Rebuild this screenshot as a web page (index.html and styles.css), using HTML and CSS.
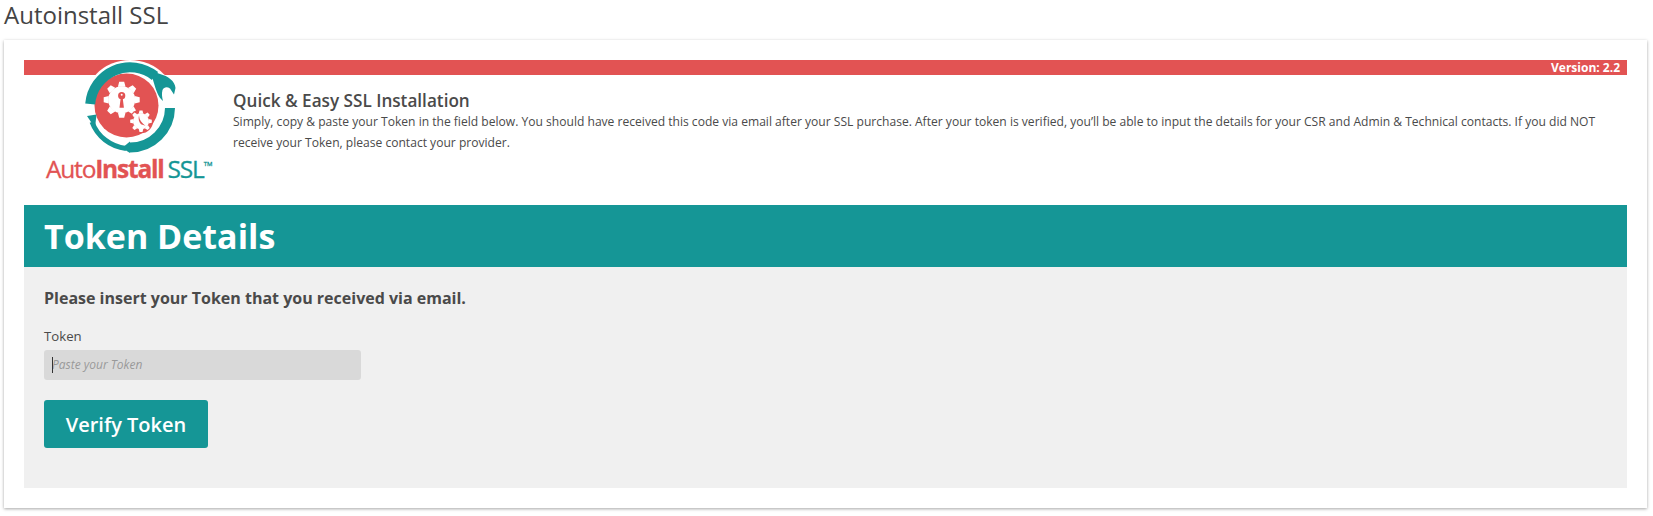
FILE: index.html
```html
<!DOCTYPE html>
<html lang="en">
<head>
    <meta charset="UTF-8">
    <meta name="viewport" content="width=device-width, initial-scale=1.0">
    <title>Autoinstall SSL</title>
    <link rel="stylesheet" href="styles.css">
</head>
<body>
    <h1 class="page-title">Autoinstall SSL</h1>

    <div class="card">
        <!-- Red version bar -->
        <div class="version-bar">Version: 2.2</div>

        <!-- Logo and intro text -->
        <div class="intro">
            <div class="logo">
                <svg class="logo-mark" viewBox="69 52 120 102" width="120" height="102" aria-hidden="true">
                    <defs>
                        <path id="big-tooth" d="M-3.800 -13 L-2.500 -18 L2.500 -18 L3.800 -13 Z" fill="#fff"/>
                        <path id="small-tooth" d="M-2.300 -7.500 L-1.500 -10.800 L1.500 -10.800 L2.300 -7.500 Z" fill="#fff"/>
                    </defs>
                    <circle cx="130" cy="107.500" r="47.500" fill="#fff"/>
                    <circle cx="126.500" cy="105.500" r="32" fill="#e25353"/>
                    <!-- wrench head, then the top arc -->
                    <path d="M152 71 L160 74 C168 76 175 81 175.500 88 L174 94.500 L170 88.500 C167 86.500 164 87 162.500 90 C161.500 94 162 97 163 101 C158 97 156 90 153 80 Z" fill="#159696" stroke="#fff" stroke-width="1.500" paint-order="stroke"/>
                    <path d="M90.200 104 A40 40 0 0 1 155 76" fill="none" stroke="#159696" stroke-width="10"/>
                    <!-- lower right arc -->
                    <path d="M170 108 A40 40 0 0 1 130 147.500" fill="none" stroke="#159696" stroke-width="10"/>
                    <path d="M130 141.500 L130 153 L122 148 Z" fill="#159696"/>
                    <!-- lower left arc -->
                    <path d="M126 148.500 A41 41 0 0 1 92 122" fill="none" stroke="#159696" stroke-width="5"/>
                    <path d="M87 116 L96.500 114.500 L95 128 Z" fill="#159696"/>
                    <!-- big gear with keyhole -->
                    <g transform="translate(121.700 99.700)">
                        <circle r="13.500" fill="#fff"/>
                        <use href="#big-tooth"/>
                        <use href="#big-tooth" transform="rotate(45)"/>
                        <use href="#big-tooth" transform="rotate(90)"/>
                        <use href="#big-tooth" transform="rotate(135)"/>
                        <use href="#big-tooth" transform="rotate(180)"/>
                        <use href="#big-tooth" transform="rotate(225)"/>
                        <use href="#big-tooth" transform="rotate(270)"/>
                        <use href="#big-tooth" transform="rotate(315)"/>
                        <circle cy="-4" r="3.600" fill="#e25353"/>
                        <path d="M-1 -2 L1 -2 L2.200 8 L-2.200 8 Z" fill="#e25353"/>
                        <circle cy="-5" r="1" fill="#fff"/>
                    </g>
                    <!-- small gear with clock hands -->
                    <g transform="translate(141 121.300)">
                        <circle r="12" fill="#e25353"/>
                        <circle r="8" fill="#fff"/>
                        <use href="#small-tooth"/>
                        <use href="#small-tooth" transform="rotate(45)"/>
                        <use href="#small-tooth" transform="rotate(90)"/>
                        <use href="#small-tooth" transform="rotate(135)"/>
                        <use href="#small-tooth" transform="rotate(180)"/>
                        <use href="#small-tooth" transform="rotate(225)"/>
                        <use href="#small-tooth" transform="rotate(270)"/>
                        <use href="#small-tooth" transform="rotate(315)"/>
                        <path d="M-2 -6 C-1.500 -2 -1 0 4.500 4.500 L0 3 C-2 1 -3 -2 -2 -6 Z" fill="#e25353"/>
                    </g>
                </svg>
                <div class="logo-text">Auto<b>Install</b><span class="logo-ssl">SSL<sup>TM</sup></span></div>
            </div>
            <div class="intro-text">
                <h2>Quick &amp; Easy SSL Installation</h2>
                <p>Simply, copy &amp; paste your Token in the field below. You should have received this code via email after your SSL purchase. After your token is verified, you’ll be able to input the details for your CSR and Admin &amp; Technical contacts. If you did NOT receive your Token, please contact your provider.</p>
            </div>
        </div>

        <h2 class="band">Token Details</h2>

        <!-- Token form -->
        <form class="token-form">
            <h3>Please insert your Token that you received via email.</h3>
            <label for="token">Token</label>
            <div class="token-field">
                <input type="text" id="token" name="token" placeholder="Paste your Token">
            </div>
            <button type="button">Verify Token</button>
        </form>
    </div>
</body>
</html>
```

FILE: styles.css
```css
/* General styling */
body {
    font-family: "Open Sans", Arial, sans-serif;
    margin: 0;
    background-color: #fff;
    color: #4a4a4a;
}

.page-title {
    margin: 0;
    padding: 0 4px;
    font-size: 24px;
    line-height: 29px;
    font-weight: 400;
    color: #444;
}

/* Main card */
.card {
    margin: 11px 6px 8px 4px;
    padding: 20px;
    background: #fff;
    box-shadow: 0 1px 3px rgba(0, 0, 0, 0.35);
}

.version-bar {
    height: 15px;
    line-height: 15px;
    padding-right: 7px;
    text-align: right;
    font-size: 12px;
    font-weight: 700;
    color: #fff;
    background-color: #e25353;
}

/* Logo and intro */
.intro {
    display: flex;
    height: 130px;
}

.logo {
    width: 209px;
    flex-shrink: 0;
    margin-top: -23px;
}

.logo-mark {
    display: block;
    margin-left: 45px;
}

.logo-text {
    margin-left: 22px;
    font-size: 24.5px;
    line-height: 30px;
    letter-spacing: -1.2px;
    white-space: nowrap;
    color: #e25353;
    -webkit-text-stroke: 0.3px currentColor;
}

.logo-ssl {
    margin-left: 4px;
    color: #159696;
}

.logo-ssl sup {
    font-size: 6px;
    letter-spacing: 0;
    vertical-align: 12px;
    line-height: 0;
}

.intro-text h2 {
    margin: 15px 0 0;
    font-size: 17.15px;
    line-height: 22px;
    font-weight: 600;
}

.intro-text p {
    margin: -1px 0 0;
    font-size: 12.09px;
    line-height: 21px;
}

/* Teal heading */
.band {
    margin: 0;
    padding: 0 20px;
    height: 62px;
    line-height: 62px;
    font-size: 34px;
    font-weight: 700;
    color: #fff;
    background-color: #159696;
}

/* Form */
.token-form {
    height: 221px;
    padding: 0 20px;
    box-sizing: border-box;
    overflow: hidden;
    background-color: #f0f0f0;
}

.token-form h3 {
    margin: 19px 0 0;
    font-size: 16px;
    line-height: 24px;
    font-weight: 700;
}

.token-form label {
    display: block;
    margin-top: 16px;
    font-size: 13.2px;
    line-height: 20px;
}

.token-field {
    position: relative;
    width: 317px;
    margin-top: 4px;
}

/* Text caret in the empty input */
.token-field::before {
    content: "";
    position: absolute;
    left: 8px;
    top: 7px;
    width: 1px;
    height: 16px;
    background-color: #333;
}

.token-field input {
    display: block;
    width: 100%;
    height: 30px;
    box-sizing: border-box;
    padding: 0 8px 2px;
    border: none;
    border-radius: 3px;
    font-family: inherit;
    font-size: 12px;
    background-color: #d9d9d9;
}

.token-field input::placeholder {
    font-style: italic;
    color: #999;
}

button {
    display: block;
    width: 164px;
    height: 48px;
    margin-top: 20px;
    padding: 0;
    border: none;
    border-radius: 3px;
    font-family: inherit;
    font-size: 20px;
    font-weight: 600;
    color: #fff;
    background-color: #159696;
    cursor: pointer;
}
```
